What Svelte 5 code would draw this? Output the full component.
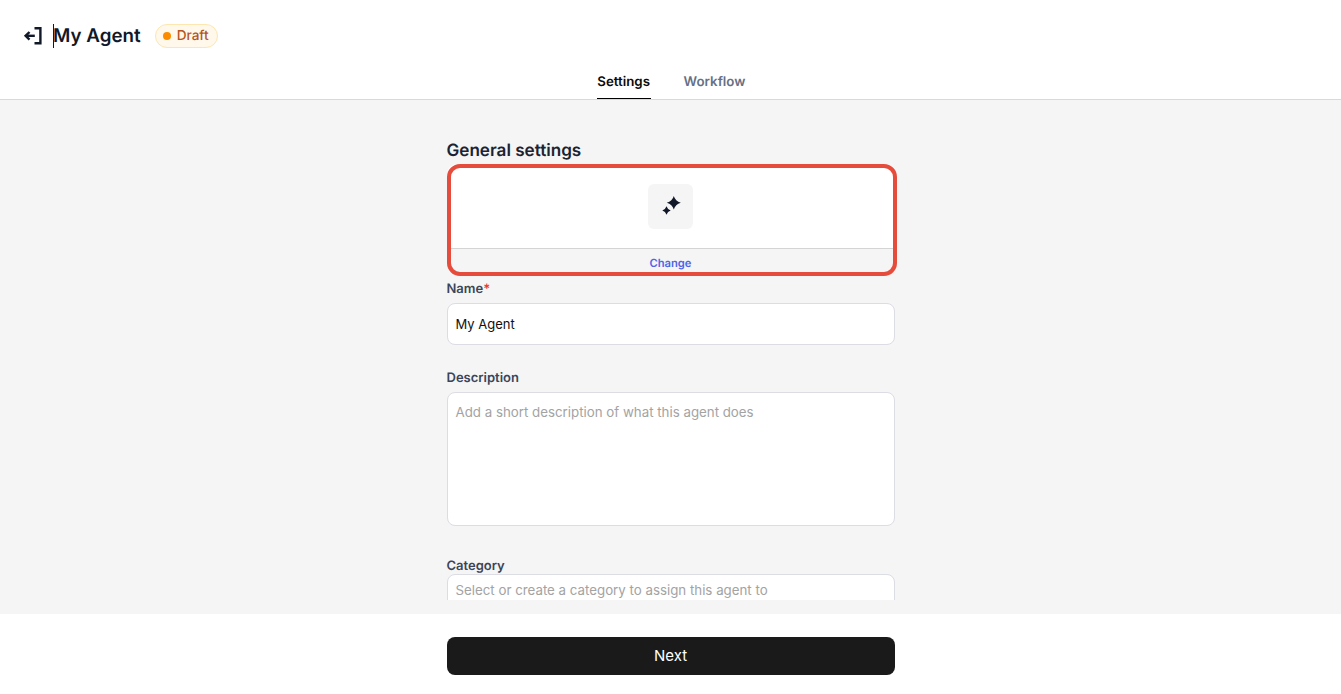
<script>
  let name = "My Agent";
</script>

<div class="page">
  <header class="header">
    <div class="title-row">
      <button class="back" aria-label="Back">
        <svg width="24" height="24" viewBox="0 0 24 24" fill="none" stroke="#111827" stroke-width="2.4" stroke-linecap="butt">
          <path d="M13.500 4.300h5.900v15h-5.900" />
          <path d="M13.800 11.800H5" />
          <path d="M8.500 8 4.600 11.800l3.900 3.800" />
        </svg>
      </button>
      <div class="title"><span class="caret"></span>My Agent</div>
      <div class="badge"><span class="dot"></span>Draft</div>
    </div>
    <nav class="tabs">
      <div class="tab active">Settings</div>
      <div class="tab">Workflow</div>
    </nav>
  </header>

  <main class="main">
    <div class="scroll">
      <div class="form">
        <h2 class="heading">General settings</h2>

        <div class="icon-card">
          <div class="icon-top">
            <div class="icon-box">
              <svg width="20" height="20" viewBox="0 0 20 20" fill="#111827">
                <path d="M12.800 0Q14.300 5.300 19.800 6.800 14.300 8.300 12.800 13.600 11.300 8.300 5.800 6.800 11.300 5.300 12.800 0z" />
                <path d="M5.500 10.300Q6.500 13.500 9.700 14.500 6.500 15.500 5.500 18.700 4.500 15.500 1.300 14.500 4.500 13.500 5.500 10.300z" />
              </svg>
            </div>
          </div>
          <div class="icon-change">Change</div>
          <div class="highlight"></div>
        </div>

        <label class="label first" for="agent-name">Name<span class="req">*</span></label>
        <input id="agent-name" class="input" bind:value={name} />

        <label class="label" for="agent-desc">Description</label>
        <textarea id="agent-desc" class="input area" placeholder="Add a short description of what this agent does"></textarea>

        <label class="label cat" for="agent-cat">Category</label>
        <input id="agent-cat" class="input tall" placeholder="Select or create a category to assign this agent to" />
      </div>
    </div>
  </main>

  <footer class="footer">
    <button class="next">Next</button>
  </footer>
</div>

<style>
  :global(body) {
    margin: 0;
    font-family: Inter, "Liberation Sans", sans-serif;
    background: #fff;
    text-rendering: geometricPrecision;
  }

  .page {
    display: flex;
    flex-direction: column;
    height: 694px;
    overflow: hidden;
  }

  .header {
    height: 100px;
    box-sizing: border-box;
    border-bottom: 1px solid #d9d9d9;
    background: #fff;
    display: flex;
    flex-direction: column;
    flex-shrink: 0;
  }

  .title-row {
    display: flex;
    align-items: center;
    height: 48px;
    margin-top: 12px;
    padding-left: 21px;
  }

  .back {
    display: flex;
    width: 24px;
    height: 24px;
    padding: 0;
    border: none;
    background: none;
  }

  .title {
    position: relative;
    margin-left: 8px;
    margin-top: -1px;
    font-size: 18.8px;
    font-weight: 600;
    color: #111827;
  }

  .caret {
    position: absolute;
    left: 0;
    top: 0;
    width: 1px;
    height: 24px;
    background: #111827;
  }

  .badge {
    display: flex;
    align-items: center;
    gap: 6px;
    height: 22px;
    margin-left: 14px;
    padding: 0 8px 0 7px;
    border: 1px solid #fde6b0;
    border-radius: 12px;
    background: #fff8eb;
    color: #b5541f;
    font-size: 13.6px;
    font-weight: 500;
  }

  .dot {
    width: 8px;
    height: 8px;
    border-radius: 50%;
    background: #fb8c00;
  }

  .tabs {
    display: flex;
    justify-content: center;
    gap: 33px;
    height: 39px;
    padding-left: 1px;
  }

  .tab {
    box-sizing: border-box;
    height: 39px;
    padding-top: 14px;
    font-size: 13.3px;
    font-weight: 600;
    color: #667085;
  }

  .tab.active {
    min-width: 54px;
    text-align: center;
    color: #0b0b0b;
    border-bottom: 1px solid #000;
  }

  .main {
    flex: 1;
    min-height: 0;
    background: #f5f5f5;
    padding-bottom: 14px;
    box-sizing: border-box;
    display: flex;
    flex-direction: column;
  }

  .scroll {
    flex: 1;
    min-height: 0;
    overflow: hidden;
  }

  .form {
    width: 448px;
    margin: 0 auto;
    padding-top: 39px;
  }

  .heading {
    margin: 0;
    height: 24px;
    line-height: 24px;
    font-size: 17.1px;
    font-weight: 600;
    color: #1b2333;
  }

  .icon-card {
    position: relative;
    height: 111px;
    margin-top: 1px;
    border-radius: 10px;
    background: #f5f5f5;
  }

  .icon-top {
    display: flex;
    align-items: center;
    justify-content: center;
    height: 84px;
    background: #fff;
    border-bottom: 1px solid #d4d4d4;
    border-radius: 10px 10px 0 0;
  }

  .icon-box {
    display: flex;
    align-items: center;
    justify-content: center;
    width: 45px;
    height: 45px;
    border-radius: 6px;
    background: #f5f5f5;
  }

  .icon-change {
    padding-top: 7px;
    text-align: center;
    font-size: 11.2px;
    font-weight: 600;
    color: #4f63e7;
  }

  .highlight {
    position: absolute;
    left: 0;
    top: 0;
    width: 450px;
    height: 112px;
    box-sizing: border-box;
    border: 4px solid #e64c3c;
    border-radius: 13px;
    pointer-events: none;
  }

  .label {
    display: block;
    margin-top: 23px;
    height: 18px;
    line-height: 20px;
    font-size: 13px;
    font-weight: 600;
    color: #3c4558;
  }

  .label.first {
    margin-top: 4px;
  }

  .label.cat {
    margin-top: 30px;
  }

  .req {
    color: #e53935;
  }

  .input {
    display: block;
    box-sizing: border-box;
    width: 100%;
    height: 42px;
    margin-top: 6px;
    padding: 0 8px;
    border: 1px solid #dcdce4;
    border-radius: 8px;
    background: #fff;
    outline: none;
    font-family: inherit;
    font-size: 13px;
    color: #111;
  }

  .input::placeholder {
    color: #a3a3a3;
    opacity: 1;
    font-size: 13.3px;
  }

  .area {
    height: 134px;
    padding: 10px 8px;
    resize: none;
    line-height: 18px;
  }

  .tall {
    height: 43px;
    margin-top: 0;
    padding-bottom: 12px;
  }

  .footer {
    height: 80px;
    flex-shrink: 0;
    box-sizing: border-box;
    padding-top: 23px;
    background: #fff;
  }

  .next {
    display: block;
    width: 448px;
    height: 38px;
    margin: 0 auto;
    padding-bottom: 3px;
    border: none;
    border-radius: 8px;
    background: #1a1a1a;
    color: #fff;
    font-family: inherit;
    font-size: 15px;
    font-weight: 400;
  }
</style>
